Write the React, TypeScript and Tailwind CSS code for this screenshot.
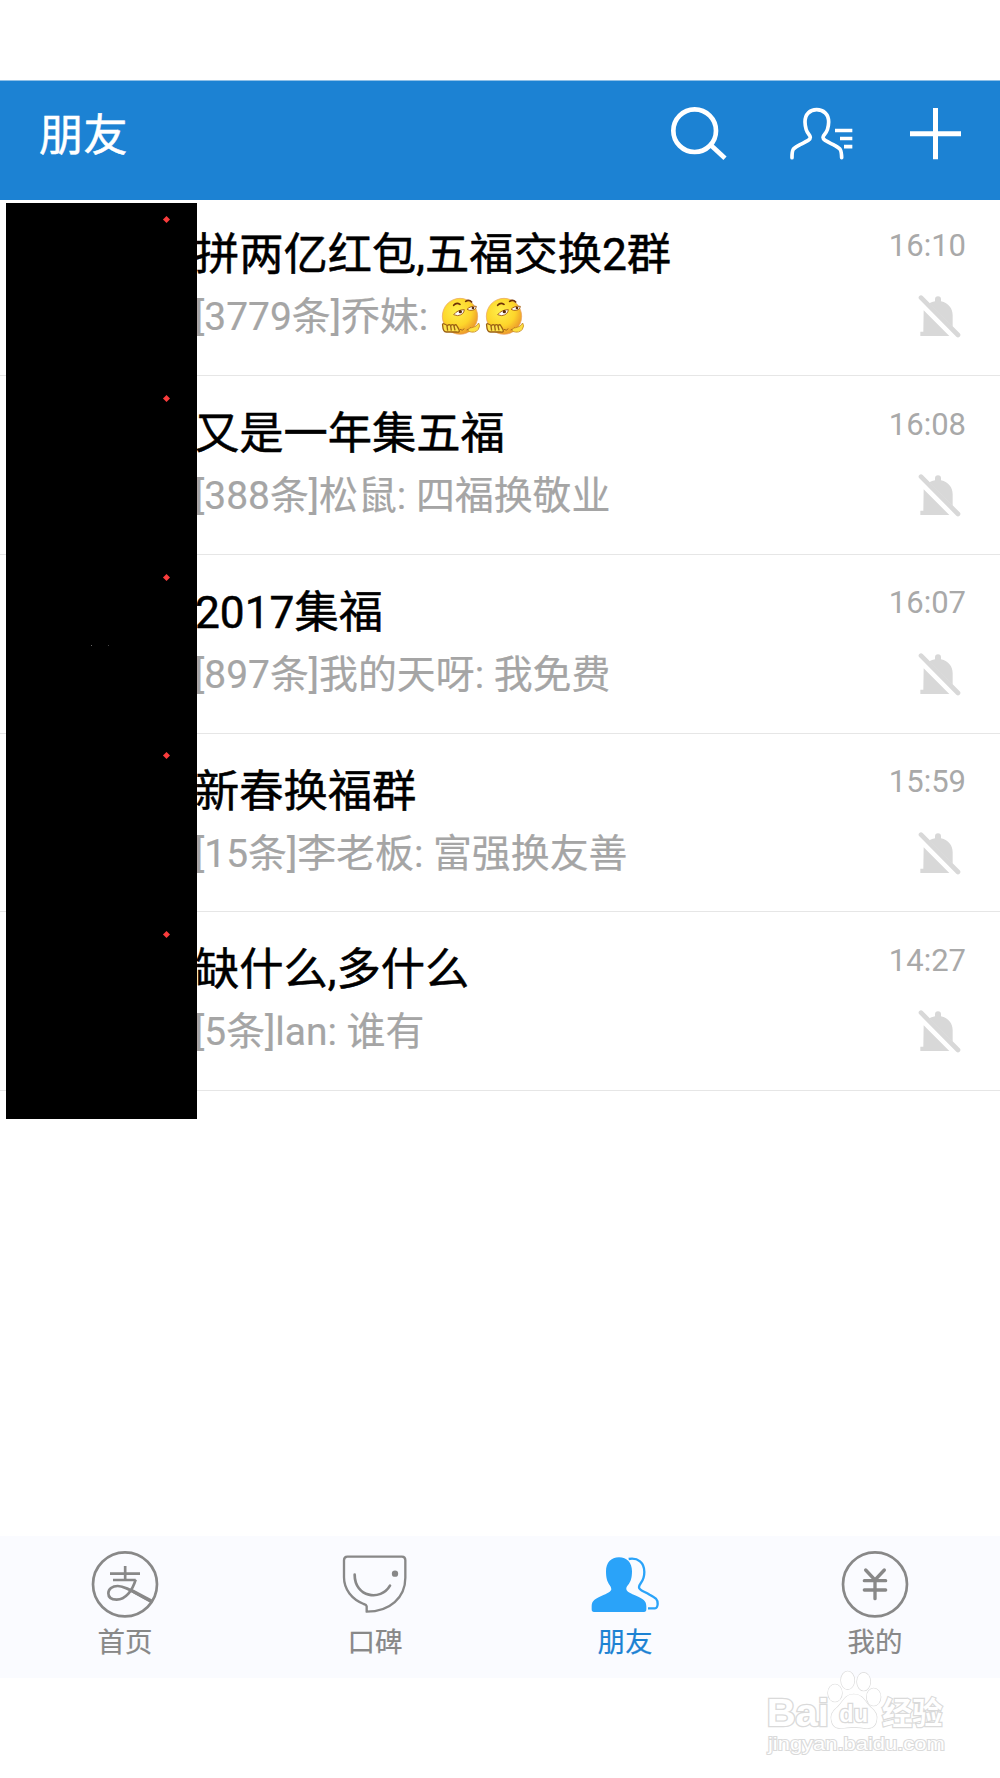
type Chat = {
  title: string;
  preview: string;
  time: string;
  emojis?: number;
};

const chats: Chat[] = [
  { title: "拼两亿红包,五福交换2群", preview: "[3779条]乔妹: ", time: "16:10", emojis: 2 },
  { title: "又是一年集五福", preview: "[388条]松鼠: 四福换敬业", time: "16:08" },
  { title: "2017集福", preview: "[897条]我的天呀: 我免费", time: "16:07" },
  { title: "新春换福群", preview: "[15条]李老板: 富强换友善", time: "15:59" },
  { title: "缺什么,多什么", preview: "[5条]lan: 谁有", time: "14:27" },
];

const SearchIcon = () => (
  <svg width="60" height="60" viewBox="90 69 180 180" fill="none" stroke="#fff" strokeWidth="14">
    <circle cx="164" cy="152" r="64" />
    <path d="M212 195L255 235" />
  </svg>
);

const ContactsIcon = () => (
  <svg width="65" height="60" viewBox="447 69 195 180" fill="none" stroke="#fff" strokeWidth="11">
    <path
      strokeLinecap="round"
      d="M456 233C456 205 459 206 480 194C500 184 511 180 511 172C511 162 496 163 495 126C495 102 510 89 530 89C550 89 566 102 566 126C565 163 549 162 549 172C549 180 560 184 580 194C601 206 604 205 605 233"
    />
    <path d="M585 151.500H637M600 175.500H637M612 200H637" />
  </svg>
);

const PlusIcon = () => (
  <svg width="53" height="60" viewBox="807 69 159 180" fill="none" stroke="#fff" strokeWidth="15">
    <path d="M810 161H963M886.500 84V238" />
  </svg>
);

const MutedBell = () => (
  <svg width="43" height="44" viewBox="174 252 129 132" fill="#d8d8d8">
    <path d="M191 301L268 378H181V365H190Z" />
    <path d="M208 280Q216 276 225 274V268A9 9 0 0 1 243 268V274C266 279 278 296 278 316V350Z" />
    <path d="M183 263L294 375" stroke="#d8d8d8" strokeWidth="14" strokeLinecap="round" />
  </svg>
);

const SmirkEmoji = () => (
  <svg className="shrink-0" width="40" height="40" viewBox="34 33 120 120">
    <defs>
      <radialGradient id="face" cx="0.4" cy="0.35" r="0.7">
        <stop offset="0" stopColor="#fff04a" />
        <stop offset="0.6" stopColor="#fdd52b" />
        <stop offset="1" stopColor="#ea912b" />
      </radialGradient>
    </defs>
    <ellipse cx="91" cy="91" rx="53" ry="54" fill="url(#face)" stroke="#e9a060" strokeWidth="2" />
    <path d="M72 86Q84 71 104 71Q103 86 84 89Z" fill="#fff" stroke="#a8651c" strokeWidth="3" />
    <path d="M112 70Q122 59 140 61Q139 74 120 73Z" fill="#fff" stroke="#a8651c" strokeWidth="3" />
    <circle cx="92" cy="77" r="5" fill="#5c2c0c" />
    <circle cx="130" cy="66" r="4" fill="#5c2c0c" />
    <path d="M72 58Q80 48 91 55M108 46Q118 39 126 48" fill="none" stroke="#6d3108" strokeWidth="5" strokeLinecap="round" />
    <path d="M91 130Q98 136 104 128M111 132Q120 130 123 124" fill="none" stroke="#a8651c" strokeWidth="3" />
    <path
      d="M39 119Q37 111 44 114Q51 117 53 119Q59 113 63 119Q69 113 73 119Q79 113 82 120L88 131Q92 140 80 138H50Q40 137 39 119Z"
      fill="#fde34b"
      stroke="#9c6214"
      strokeWidth="4"
    />
    <path d="M52 120L54 134M63 120L65 134M73 120L76 133" stroke="#9c6214" strokeWidth="4" />
    <path d="M116 136Q113 126 127 125Q141 123 147 111Q153 119 146 130Q137 143 116 136Z" fill="#fde03f" stroke="#c98a25" strokeWidth="2.500" />
  </svg>
);

const HomeIcon = () => (
  <svg width="70" height="70" viewBox="90 60 210 210" fill="none" stroke="#888" strokeWidth="8">
    <circle cx="195" cy="163" r="96" />
    <path d="M150 131H240M195.500 108V150M159 150H227" />
    <path d="M227 149C217 183 196 209 170 209C153 209 145 201 145 190C145 177 157 168 173 168C197 168 226 190 273 215" />
    <path d="M212 180L274 213" strokeWidth="10" />
  </svg>
);

const KoubeiIcon = () => (
  <svg width="70" height="70" viewBox="840 60 210 210" fill="none" stroke="#888" strokeWidth="7" strokeLinecap="round" strokeLinejoin="round">
    <path d="M862 80H1026Q1036 80 1036 91V143C1036 202 990 245 920 245V229Q919 224 911 222C876 208 852 179 852 142V91Q852 80 862 80Z" />
    <path d="M884 134C884 202 962 215 990 167" strokeWidth="8" />
    <circle cx="1005" cy="131" r="9.500" fill="#888" stroke="none" />
  </svg>
);

const FriendsIcon = () => (
  <svg width="70" height="70" viewBox="90 60 210 210" fill="#2aa3f9">
    <path d="M102 246Q95 246 95 238V228C95 212 106 206 124 198C142 190 154 185 154 177C154 164 138 164 138 124C138 98 153 82 177 82C201 82 216 98 216 124C216 164 199 164 199 177C199 185 212 190 230 198C248 206 259 212 259 228V238Q259 246 252 246Z" />
    <path
      d="M206 87C234 82 253 98 253 126C253 158 237 158 237 172C237 182 251 183 269 194C288 204 293 208 293 222Q292 235 285 235H264"
      fill="none"
      stroke="#2aa3f9"
      strokeWidth="7"
    />
  </svg>
);

const MineIcon = () => (
  <svg width="70" height="70" viewBox="840 60 210 210" fill="none" stroke="#888" strokeWidth="8">
    <circle cx="945" cy="163" r="96" />
    <path d="M917 120L945 150L973 120M913 152H977M913 180H977M945 150V206" strokeWidth="10" strokeLinecap="round" />
  </svg>
);

const tabs = [
  { label: "首页", icon: <HomeIcon />, color: "text-[#888888]" },
  { label: "口碑", icon: <KoubeiIcon />, color: "text-[#888888]" },
  { label: "朋友", icon: <FriendsIcon />, color: "text-[#1c82d3]" },
  { label: "我的", icon: <MineIcon />, color: "text-[#888888]" },
];

const ChatRow = ({ title, preview, time, emojis = 0 }: Chat) => (
  <div className="flex justify-between h-[178.75px] pl-[194px] pr-[34px] border-b border-[#e6e6e6]">
    <div className="pt-[28px]">
      <h2 className="pl-px text-[44.25px] leading-[60px] text-black whitespace-nowrap [-webkit-text-stroke:0.5px_#000]">{title}</h2>
      <p className="flex items-center mt-[3px] h-[58px] text-[38.9px] leading-[58px] text-[#a5a5a5] whitespace-pre [-webkit-text-stroke:0.2px_#a5a5a5]">
        {preview}
        {emojis > 0 && (
          <span className="flex gap-[4.3px] pl-[3px]">
            {Array.from({ length: emojis }, (_, i) => (
              <SmirkEmoji key={i} />
            ))}
          </span>
        )}
      </p>
    </div>
    <div className="flex flex-col items-end pt-[28.500px]">
      <span className="text-[31px] leading-[40px] text-[#a9a9a9]">{time}</span>
      <div className="mt-[28.500px] mr-[5px]">
        <MutedBell />
      </div>
    </div>
  </div>
);

const AvatarMask = () => (
  <div className="absolute left-[6px] top-[5.750px] w-[191px] h-[916px] bg-black">
    <div className="flex flex-col items-end pt-[14px] pr-[28px] gap-[173.750px]">
      {chats.map((chat) => (
        <span key={chat.time} className="w-[5px] h-[5px] rotate-45 bg-[#f93c3c]" />
      ))}
    </div>
    <span className="absolute left-[85px] top-[442px] w-px h-px bg-[#666]" />
    <span className="absolute left-[102px] top-[442px] w-px h-px bg-[#444]" />
  </div>
);

const Watermark = () => (
  <svg className="absolute right-[50px] bottom-[8px]" width="190" height="110" viewBox="0 0 570 330" fill="#fff" stroke="#dadada" strokeWidth="4">
    <g transform="translate(-60 0)" fontFamily="'Liberation Sans', 'Noto Sans CJK SC', sans-serif" fontWeight="700" paintOrder="stroke">
      <text x="80" y="198" fontSize="114" textLength="187" lengthAdjust="spacingAndGlyphs" strokeWidth="8">Bai</text>
      <ellipse cx="285" cy="99" rx="21" ry="26" />
      <ellipse cx="323" cy="61" rx="20" ry="27" />
      <ellipse cx="371" cy="65" rx="20" ry="27" />
      <ellipse cx="401" cy="111" rx="21" ry="26" />
      <path d="M341 103C370 103 375 127 390 140C408 155 413 166 409 183C402 216 369 201 342 201C314 201 282 216 275 183C271 166 276 155 294 140C309 127 314 103 341 103Z" />
      <text x="298" y="187" fontSize="73" strokeWidth="8" textLength="86" lengthAdjust="spacingAndGlyphs">du</text>
      <text x="426" y="192" fontSize="91" strokeWidth="7" textLength="182">经验</text>
      <text x="84" y="271" fontSize="57" fontWeight="400" strokeWidth="6" textLength="530" lengthAdjust="spacingAndGlyphs">
        jingyan.baidu.com
      </text>
    </g>
  </svg>
);

export default function App() {
  return (
    <div className="relative flex flex-col w-[1000px] h-[1778px] overflow-hidden bg-white font-[Roboto,'Noto_Sans_CJK_SC',sans-serif]">
      <div className="h-[80px] shrink-0" />
      <header className="flex shrink-0 h-[120px] border-t border-[#8fc0e7] bg-[#1c82d3] pl-[39px] pr-[38px]">
        <h1 className="pt-[23px] text-[44.25px] leading-[64px] text-white [-webkit-text-stroke:0.5px_#fff]">朋友</h1>
        <div className="flex ml-auto pt-[22px]">
          <SearchIcon />
          <div className="ml-[59px]">
            <ContactsIcon />
          </div>
          <div className="ml-[55px]">
            <PlusIcon />
          </div>
        </div>
      </header>

      <main className="relative -mt-[2.750px] grow">
        {chats.map((chat) => (
          <ChatRow key={chat.time} {...chat} />
        ))}
        <AvatarMask />
      </main>

      <nav className="grid grid-cols-4 shrink-0 h-[142px] bg-[#fafbff]">
        {tabs.map((tab) => (
          <div key={tab.label} className={`flex flex-col items-center pt-[14px] ${tab.color}`}>
            {tab.icon}
            <span className="mt-[3px] text-[27.5px] leading-[40px] [-webkit-text-stroke:0.2px_currentColor]">{tab.label}</span>
          </div>
        ))}
      </nav>
      <div className="h-[100px] shrink-0" />
      <Watermark />
    </div>
  );
}
